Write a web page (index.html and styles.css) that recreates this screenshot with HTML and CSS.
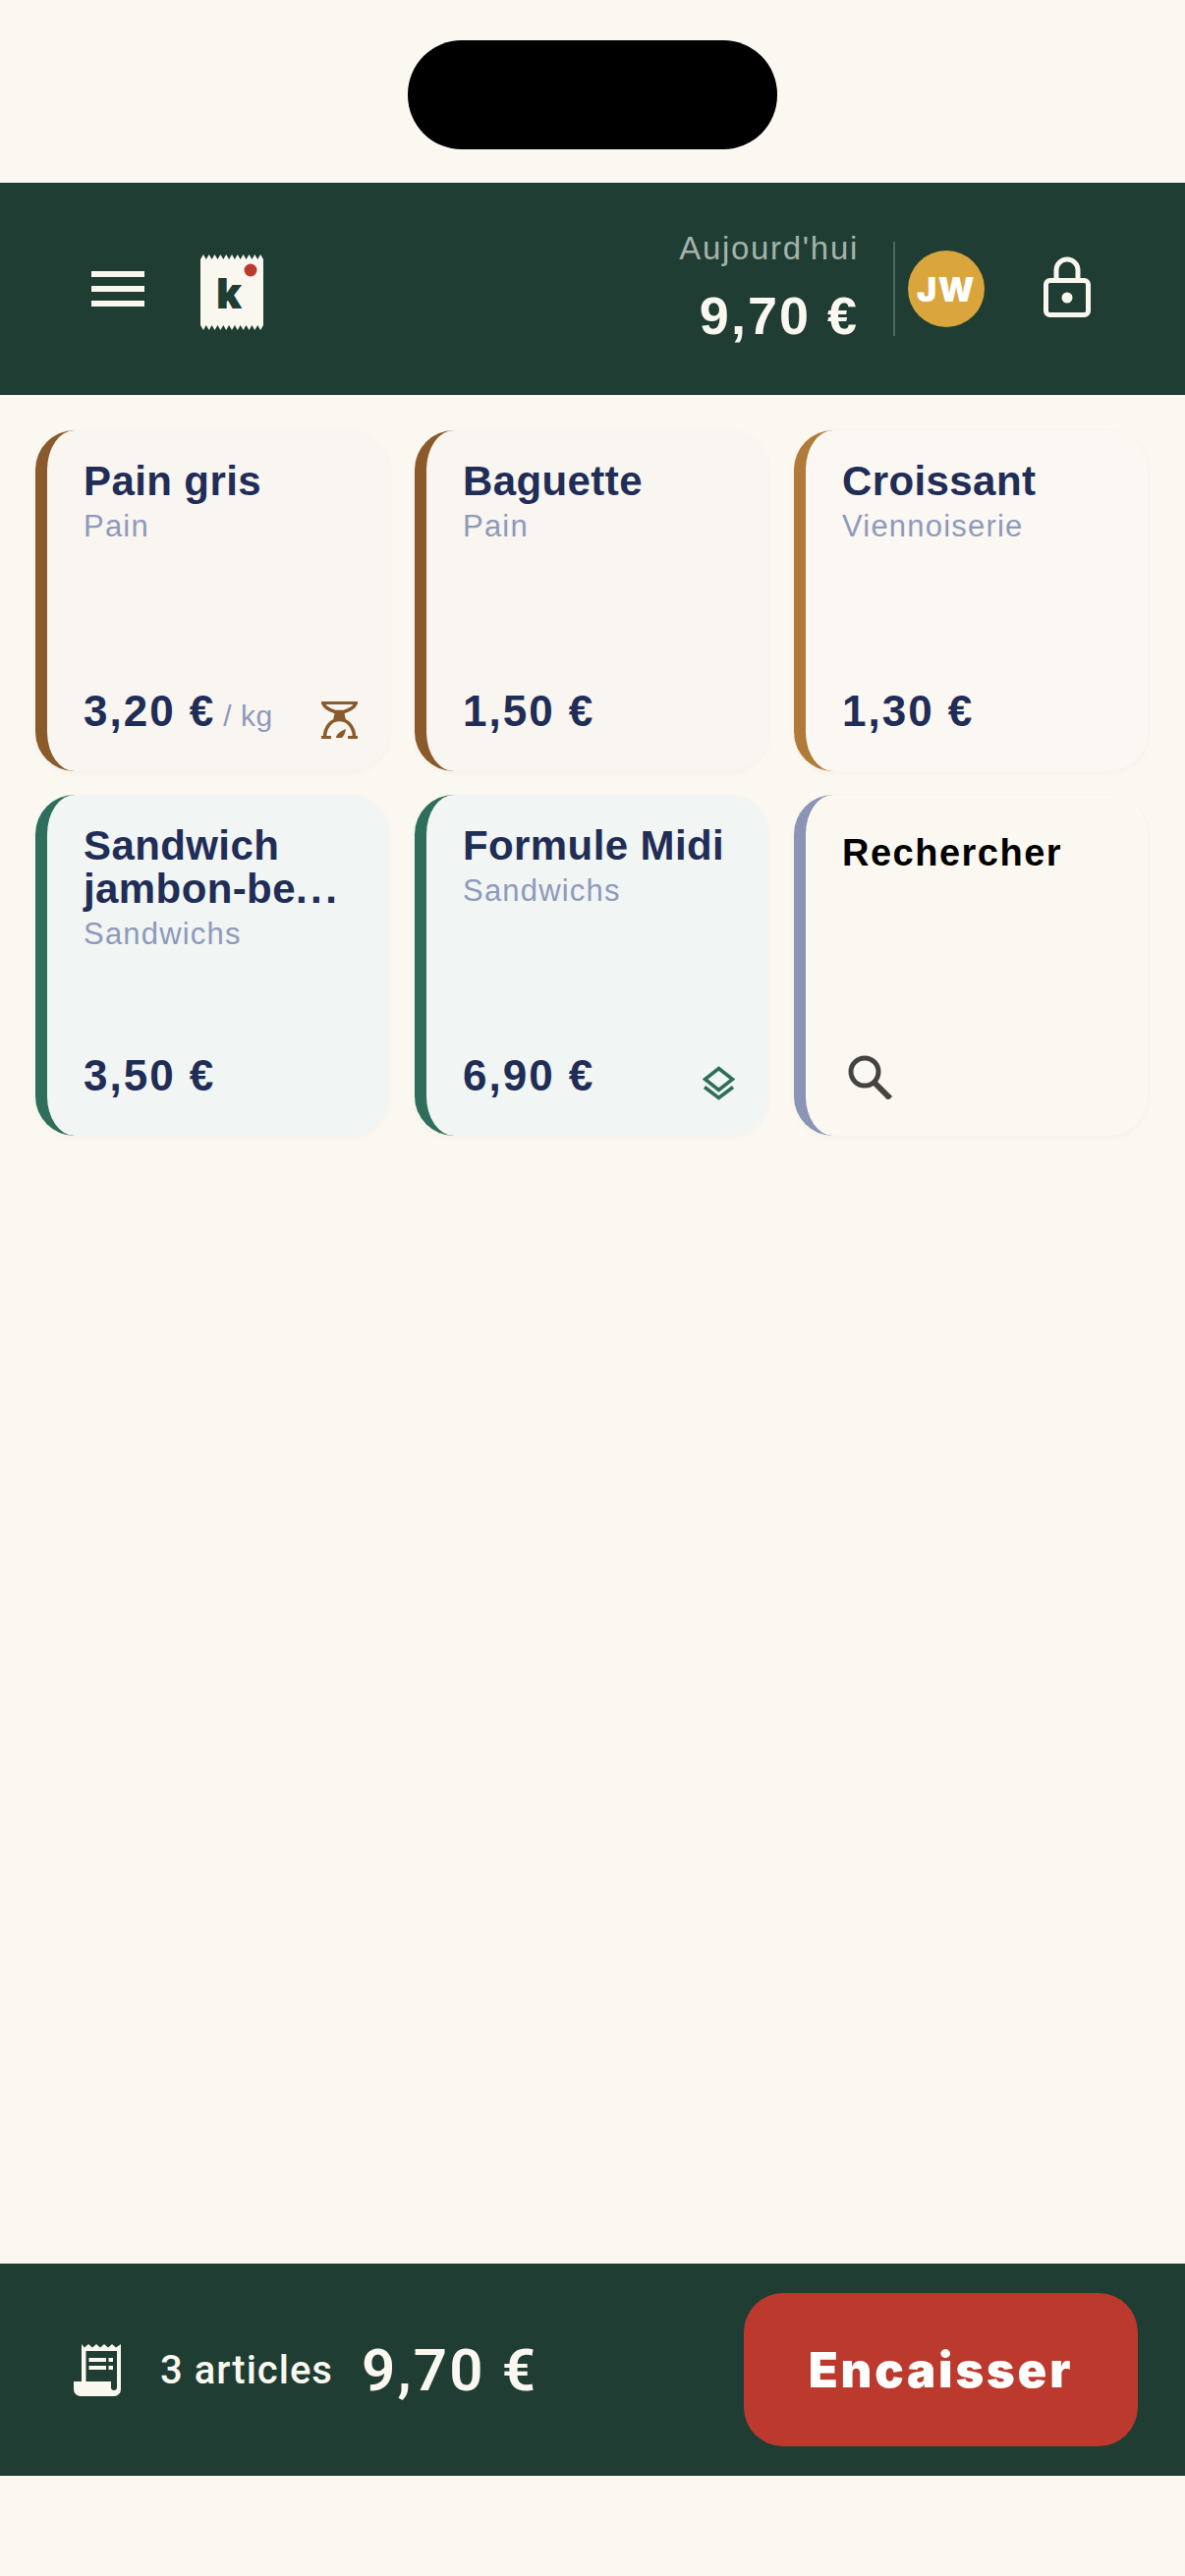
FILE: index.html
```html
<!DOCTYPE html>
<html lang="fr">
<head>
  <meta charset="utf-8">
  <title>Caisse</title>
  <meta name="viewport" content="width=device-width, initial-scale=1">
  <link rel="stylesheet" href="styles.css">
</head>
<body>
  <div class="page">
    <div class="statusbar"><div class="notch"></div></div>

    <header class="topbar">
      <div class="burger"><span></span><span></span><span></span></div>
      <svg class="logo" viewBox="0 0 64 77">
        <polygon fill="#faf7f0" points="0,5 2.9,0 5.8,5 8.7,0 11.6,5 14.5,0 17.5,5 20.4,0 23.3,5 26.2,0 29.1,5 32,0 34.9,5 37.8,0 40.7,5 43.6,0 46.5,5 49.5,0 52.4,5 55.3,0 58.2,5 61.1,0 64,5 64,72 61.1,77 58.2,72 55.3,77 52.4,72 49.5,77 46.5,72 43.6,77 40.7,72 37.8,77 34.9,72 32,77 29.1,72 26.2,77 23.3,72 20.4,77 17.5,72 14.5,77 11.6,72 8.7,77 5.8,72 2.9,77 0,72"/>
        <circle cx="51" cy="16" r="6.5" fill="#bc3a2d"/>
        <text class="logo-k" x="16" y="55">k</text>
      </svg>
      <div class="today">
        <div class="today-label">Aujourd'hui</div>
        <div class="today-total">9,70 €</div>
      </div>
      <div class="divider"></div>
      <div class="avatar">JW</div>
      <svg class="lock" viewBox="0 0 48 62" fill="none" stroke="#faf7f0" stroke-width="5">
        <rect x="2.5" y="24.5" width="43" height="35" rx="4"/>
        <path d="M13 24V14a11 11 0 0 1 22 0V24"/>
        <circle cx="24" cy="42" r="5.5" fill="#faf7f0" stroke="none"/>
      </svg>
    </header>

    <main class="grid">
      <div class="card card-bread">
        <div>
          <div class="card-title">Pain gris</div>
          <div class="card-sub">Pain</div>
        </div>
        <div class="card-foot">
          <div class="price">3,20 €<span class="unit">/ kg</span></div>
          <svg class="scale-icon" viewBox="0 0 37 38" fill="none" stroke="#8a5a2b" stroke-width="3.5">
            <path d="M0 1.5H37" stroke-width="3"/>
            <path d="M2 2C4 7 9 9 14 10.500H23C28 9 33 7 35 2"/>
            <path d="M14 10H23L25 19H12Z" fill="#8a5a2b" stroke="none"/>
            <path d="M3.500 36.500C3.500 26 10 18.500 18.500 18.500C27 18.500 33.500 26 33.500 36.500"/>
            <path d="M0 36.500H10M27 36.500H37" stroke-width="3"/>
            <path d="M15 37C15 33 20 30 25 28C24.500 32 23 35 21 37Z" fill="#8a5a2b" stroke="none"/>
          </svg>
        </div>
      </div>

      <div class="card card-bread">
        <div>
          <div class="card-title">Baguette</div>
          <div class="card-sub">Pain</div>
        </div>
        <div class="card-foot">
          <div class="price">1,50 €</div>
        </div>
      </div>

      <div class="card card-pastry">
        <div>
          <div class="card-title">Croissant</div>
          <div class="card-sub">Viennoiserie</div>
        </div>
        <div class="card-foot">
          <div class="price">1,30 €</div>
        </div>
      </div>

      <div class="card card-sandwich">
        <div>
          <div class="card-title">Sandwich jambon-be<span class="dots">...</span></div>
          <div class="card-sub">Sandwichs</div>
        </div>
        <div class="card-foot">
          <div class="price">3,50 €</div>
        </div>
      </div>

      <div class="card card-sandwich">
        <div>
          <div class="card-title">Formule Midi</div>
          <div class="card-sub">Sandwichs</div>
        </div>
        <div class="card-foot">
          <div class="price">6,90 €</div>
          <svg class="layers-icon" viewBox="0 0 33 35" fill="none" stroke="#2e6e5a" stroke-width="3.5">
            <path d="M16.500 2.500L30.500 13.500L16.500 24.500L2.500 13.500Z"/>
            <path d="M2 21.500L16.500 32.500L31 21.500"/>
          </svg>
        </div>
      </div>

      <div class="card card-search">
        <div class="search-title">Rechercher</div>
        <svg class="search-icon" viewBox="0 0 46 45" fill="none" stroke="#444440">
          <circle cx="17" cy="17" r="14" stroke-width="5"/>
          <path d="M27 28L43 44" stroke-width="6"/>
        </svg>
      </div>
    </main>

    <footer class="cartbar">
      <svg class="receipt" viewBox="0 0 48 53">
        <path fill="#faf7f0" fill-rule="evenodd" d="M8 0L11 3.500L15 0L19 3.500L23 0L27 3.500L31 0L35 3.500L39 0L43 3.500L48 0V46a7 7 0 0 1 -7 7H7a7 7 0 0 1 -7 -7V38H8ZM12.500 7V38H38V44a3 3 0 0 0 6 0V7Z"/>
        <path fill="#faf7f0" d="M15.500 14H33V18H15.500ZM35.500 14H40V18H35.500ZM15.500 22H33V26H15.500ZM35.500 22H40V26H35.500Z"/>
      </svg>
      <div class="cart-count">3 articles</div>
      <div class="cart-total">9,70 €</div>
      <div class="pay-btn">Encaisser</div>
    </footer>
  </div>
</body>
</html>
```

FILE: styles.css
```css
* {
  box-sizing: border-box;
}

body {
  margin: 0;
  background-color: #fbf8f1;
  font-family: "Liberation Sans", Arial, sans-serif;
}

.page {
  width: 1206px;
  height: 2622px;
  display: flex;
  flex-direction: column;
  overflow: hidden;
}

.statusbar {
  height: 186px;
  padding-top: 41px;
  display: flex;
  justify-content: center;
  flex-shrink: 0;
}

.notch {
  width: 376px;
  height: 111px;
  background-color: #000;
  border-radius: 55px;
}

.topbar {
  height: 216px;
  padding: 0 96px 0 93px;
  background-color: #1f3d33;
  display: flex;
  align-items: center;
  flex-shrink: 0;
}

.burger {
  width: 54px;
  display: flex;
  flex-direction: column;
  gap: 9px;
}

.burger span {
  height: 6px;
  background-color: #faf7f0;
}

.logo {
  width: 64px;
  height: 77px;
  margin: 7px 0 0 57px;
}

.logo-k {
  font-family: Inter, sans-serif;
  font-weight: 900;
  font-size: 43px;
  fill: #1f3d33;
}

.today {
  margin-left: auto;
  text-align: right;
  margin-top: -4px;
}

.today-label {
  font-size: 33px;
  letter-spacing: 1.7px;
  line-height: 40px;
  color: #a3b3a9;
}

.today-total {
  font-size: 54px;
  font-weight: 700;
  letter-spacing: 2px;
  line-height: 60px;
  margin-top: 18px;
  color: #faf7f0;
}

.divider {
  width: 2px;
  height: 96px;
  margin: 0 13px 0 35px;
  background-color: #4f6a5e;
}

.avatar {
  width: 78px;
  height: 78px;
  border-radius: 50%;
  background-color: #d9a53c;
  color: #fff;
  font-family: Inter, sans-serif;
  font-weight: 900;
  font-size: 34px;
  letter-spacing: 1.5px;
  display: flex;
  align-items: center;
  justify-content: center;
}

.lock {
  width: 48px;
  height: 62px;
  margin: -4px 0 0 60px;
}

.grid {
  flex: 1;
  padding: 36px 38px 0 36px;
  display: grid;
  grid-template-columns: repeat(3, 360px);
  grid-auto-rows: 347px;
  align-content: start;
  column-gap: 26px;
  row-gap: 24px;
}

.card {
  border-left: 12px solid;
  border-radius: 40px;
  padding: 30px 32px 33px 37px;
  display: flex;
  flex-direction: column;
  justify-content: space-between;
  box-shadow: 0 2px 6px rgba(90, 70, 40, 0.04);
}

.card-bread {
  border-color: #8a5a2b;
  background-color: #f9f5f0;
}

.card-pastry {
  border-color: #b07a38;
  background-color: #fbf7f2;
}

.card-sandwich {
  border-color: #2e6e5a;
  background-color: #f1f5f3;
}

.card-search {
  border-color: #8a94b5;
  background-color: #fbf8f1;
}

.card-title {
  font-size: 42px;
  font-weight: 700;
  letter-spacing: 0.4px;
  line-height: 44px;
  color: #1f2d57;
}

.dots {
  letter-spacing: 3.5px;
}

.card-sub {
  font-size: 31px;
  letter-spacing: 1.2px;
  line-height: 38px;
  margin-top: 5px;
  color: #8e9abb;
}

.card-foot {
  display: flex;
  justify-content: space-between;
  align-items: flex-end;
}

.price {
  font-size: 44px;
  font-weight: 700;
  letter-spacing: 2px;
  line-height: 44px;
  margin-bottom: 6px;
  color: #1f2d57;
}

.unit {
  font-size: 30px;
  font-weight: 400;
  letter-spacing: 0.5px;
  line-height: 1;
  margin-left: 8px;
  color: #8e9abb;
}

.scale-icon {
  width: 37px;
  height: 38px;
}

.layers-icon {
  width: 33px;
  height: 35px;
  margin: 0 2px 3px 0;
}

.search-title {
  font-size: 38px;
  font-weight: 700;
  letter-spacing: 1.5px;
  line-height: 44px;
  margin-top: 7px;
  color: #000;
}

.search-icon {
  width: 46px;
  height: 45px;
  margin-left: 6px;
  margin-bottom: 4px;
}

.cartbar {
  height: 216px;
  margin-bottom: 102px;
  padding: 0 48px 0 75px;
  background-color: #1f3d33;
  display: flex;
  align-items: center;
  flex-shrink: 0;
}

.receipt {
  width: 48px;
  height: 53px;
}

.cart-count {
  margin-left: 40px;
  font-family: Roboto, sans-serif;
  font-weight: 500;
  font-size: 40px;
  letter-spacing: 1px;
  color: #faf7f0;
}

.cart-total {
  margin-left: 29px;
  font-family: Roboto, sans-serif;
  font-weight: 600;
  font-size: 60px;
  letter-spacing: 2.2px;
  color: #faf7f0;
}

.pay-btn {
  margin-left: auto;
  width: 401px;
  height: 156px;
  border-radius: 40px;
  background-color: #bc3a2d;
  color: #fff;
  font-family: Inter, sans-serif;
  font-weight: 900;
  font-size: 49px;
  letter-spacing: 2.8px;
  display: flex;
  align-items: center;
  justify-content: center;
}
```
